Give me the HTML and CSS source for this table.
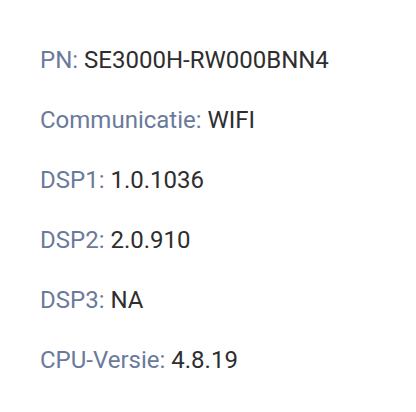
FILE: index.html
```html
<!DOCTYPE html>
<html lang="nl">
<head>
<meta charset="utf-8">
<link rel="stylesheet" href="styles.css">
</head>
<body>
<ul class="info">
  <li class="row"><span class="label">PN:</span> <span class="value">SE3000H-RW000BNN4</span></li>
  <li class="row"><span class="label">Communicatie:</span> <span class="value">WIFI</span></li>
  <li class="row"><span class="label">DSP1:</span> <span class="value">1.0.1036</span></li>
  <li class="row"><span class="label">DSP2:</span> <span class="value">2.0.910</span></li>
  <li class="row"><span class="label">DSP3:</span> <span class="value">NA</span></li>
  <li class="row"><span class="label">CPU-Versie:</span> <span class="value">4.8.19</span></li>
</ul>
</body>
</html>
```
FILE: styles.css
```css
html, body {
  margin: 0;
  padding: 0;
  background: #ffffff;
}
body {
  font-family: Roboto, "Noto Sans", sans-serif;
  font-size: 24px;
}
.info {
  list-style: none;
  margin: 0;
  padding: 46px 0 0 40px;
  display: flex;
  flex-direction: column;
  gap: 32px;
}
.row {
  line-height: 28px;
  white-space: nowrap;
}
.label {
  color: #6a7a9b;
}
.value {
  color: #2e2e2e;
}
```
